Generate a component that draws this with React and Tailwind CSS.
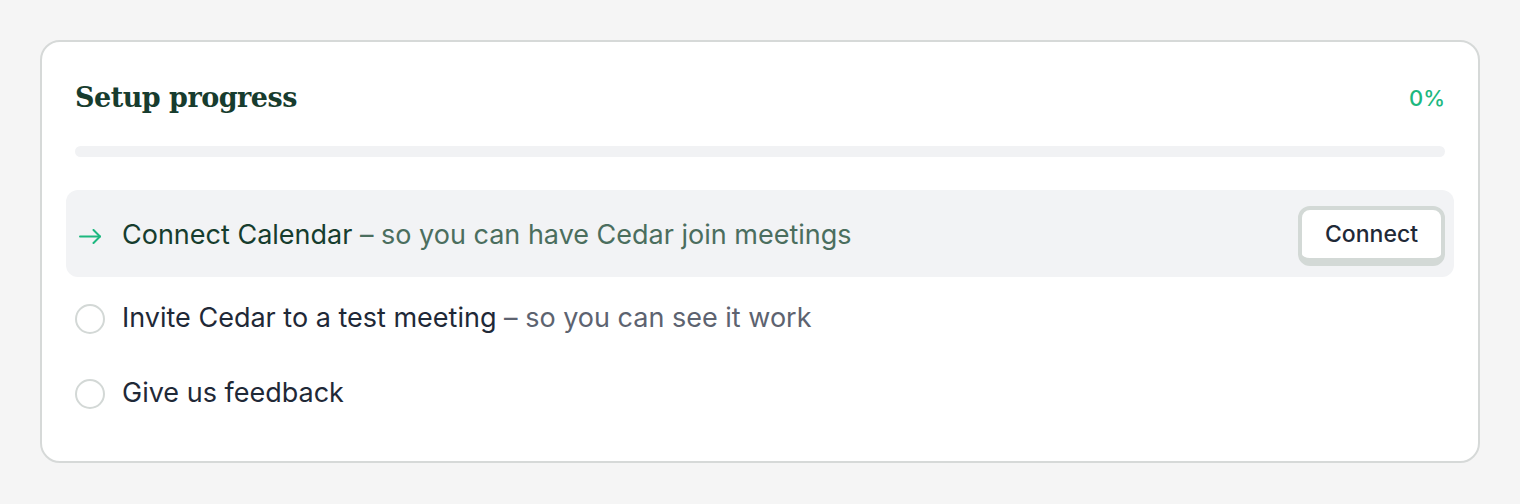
import React from 'react';

const steps = [
  {
    title: 'Connect Calendar',
    detail: 'so you can have Cedar join meetings',
    active: true,
    action: 'Connect',
  },
  {
    title: 'Invite Cedar to a test meeting',
    detail: 'so you can see it work',
  },
  {
    title: 'Give us feedback',
  },
];

const ArrowIcon = () => (
  <svg width="22" height="15" viewBox="0 0 22 15" fill="none" stroke="currentColor" strokeWidth="2" strokeLinecap="round" strokeLinejoin="round">
    <path d="M1 7.5h20" />
    <path d="M14.5 1L21 7.5L14.5 14" />
  </svg>
);

const StepRow = ({ step }) => (
  <div
    className={`flex items-center rounded-xl px-[9px] ${
      step.active ? 'bg-[#f2f3f5] pt-4 pb-[11px]' : 'min-h-[66px]'
    }`}
  >
    <div className="w-[30px] h-[30px] flex items-center justify-center shrink-0">
      {step.active ? (
        <span className="text-[#1db87f]">
          <ArrowIcon />
        </span>
      ) : (
        <span className="w-[30px] h-[30px] rounded-full border-2 border-[#d3d8d6]" />
      )}
    </div>
    <p className="ml-[17px] flex-1 text-[27px] leading-[30px] -mt-[3px]">
      <span className={step.active ? 'text-[#163d2e]' : 'text-[#1f2937]'}>{step.title}</span>
      {step.detail && (
        <span className={step.active ? 'text-[#4b6e5e]' : 'text-[#5d6370]'}>
          {' – '}
          {step.detail}
        </span>
      )}
    </p>
    {step.action && (
      <button className="h-[60px] w-[147px] rounded-[12px] border-4 border-b-8 border-[#d3d9d6] bg-white text-[23px] font-medium text-[#1f2937]">
        {step.action}
      </button>
    )}
  </div>
);

export default function App() {
  const progress = 0;

  return (
    <div className="min-h-screen bg-[#f5f5f5] p-10 font-['Inter',sans-serif]">
      <div className="rounded-[20px] border-2 border-[#d6d9d8] bg-white px-[33px] pt-[36px] pb-[34px]">
        <div className="flex items-center justify-between">
          <h2 className="font-['DejaVu_Serif',serif] text-[27px] font-bold leading-[40px] tracking-[-0.5px] text-[#173c2e]">
            Setup progress
          </h2>
          <span className="text-[22px] font-medium text-[#1db87f]">{progress}%</span>
        </div>

        <div className="mt-[28px] h-[11px] w-full rounded-full bg-[#f1f2f4]">
          <div className="h-full rounded-full bg-[#1db87f]" style={{ width: `${progress}%` }} />
        </div>

        <div className="mt-[33px] -mx-[9px] flex flex-col gap-[9px]">
          {steps.map((step) => (
            <StepRow key={step.title} step={step} />
          ))}
        </div>
      </div>
    </div>
  );
}
